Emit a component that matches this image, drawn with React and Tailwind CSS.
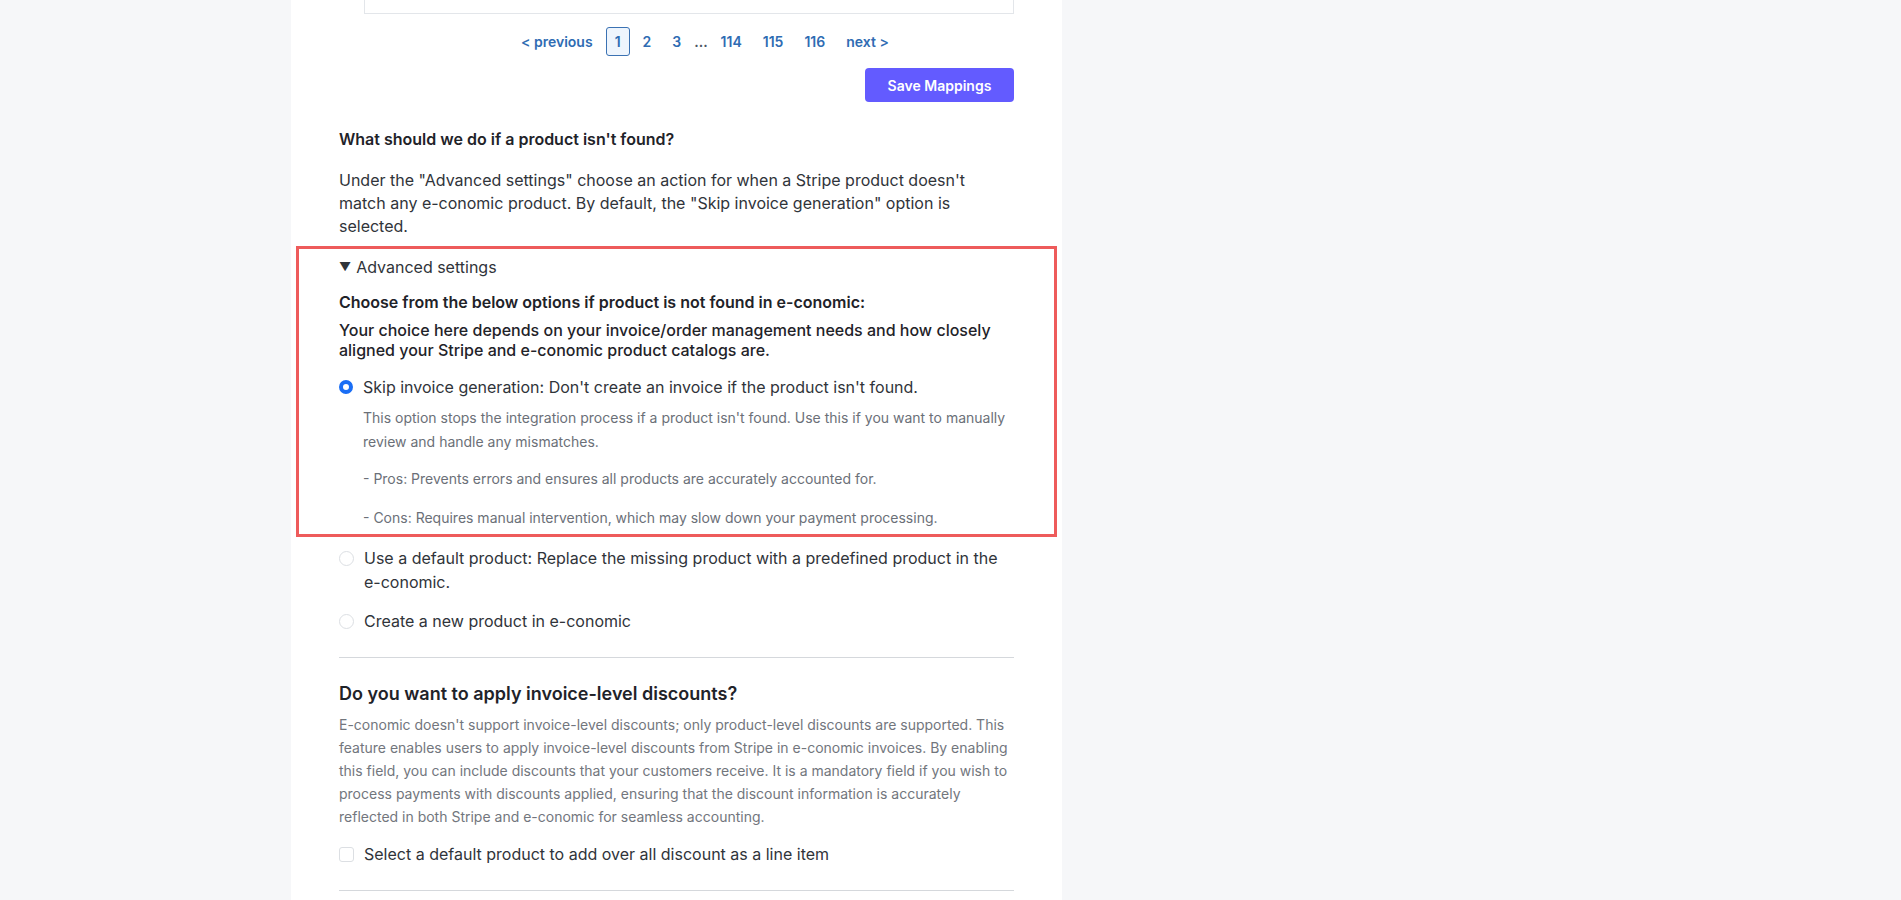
import { useState } from "react";

const pages = ["1", "2", "3", "...", "114", "115", "116"];

const Radio = ({ checked }) => (
  <span
    className={
      checked
        ? "mt-[5px] h-[14px] w-[14px] shrink-0 rounded-full border-[4px] border-[#1a6ef5] bg-white"
        : "mt-[5px] h-[15px] w-[15px] shrink-0 rounded-full border border-[#dcdfe3] bg-white"
    }
  />
);

const App = () => {
  const [choice, setChoice] = useState("skip");

  return (
    <div className="min-h-screen bg-[#f6f7f9] font-['Inter','Liberation_Sans',sans-serif] text-[#212529]">
      <div className="ml-[291px] w-[771px] min-h-screen bg-white px-[48px]">
        {/* end of mappings table */}
        <div className="ml-[25px] h-[14px] border-x border-b border-[#e3e6ea]" />

        {/* pagination */}
        <div className="mt-[13px] ml-[174px] flex items-center gap-[5px] text-[14px] font-semibold text-[#2f6cb3]">
          <span className="px-[8px]">&lt; previous</span>
          {pages.map((p) =>
            p === "..." ? (
              <span key={p} className="px-0 text-[#4b5563]">
                ...
              </span>
            ) : p === "1" ? (
              <span
                key={p}
                className="flex h-[29px] items-center rounded-[3px] border border-[#3b72b3] bg-[#eef5fd] px-[8px]"
              >
                {p}
              </span>
            ) : (
              <span key={p} className="px-[8px]">
                {p}
              </span>
            )
          )}
          <span className="px-[8px]">next &gt;</span>
        </div>

        <div className="mt-[12px] flex justify-end">
          <button className="h-[34px] w-[149px] rounded-[4px] bg-[#635bff] text-[14px] font-semibold text-white">
            Save Mappings
          </button>
        </div>

        <h3 className="mt-[25px] text-[16px] leading-[24px] font-semibold text-[#1f2329]">
          What should we do if a product isn't found?
        </h3>
        <p className="mt-[18px] text-[16px] leading-[23px] text-[#30343a]">
          Under the "Advanced settings" choose an action for when a Stripe
          product doesn't match any e-conomic product. By default, the "Skip
          invoice generation" option is selected.
        </p>

        {/* advanced settings (highlighted) */}
        <div className="-mx-[43px] mt-[8px] border-[3px] border-[#ee5b5b] pl-[40px] pr-[41px] pt-[7px] pb-[4px]">
          <div className="flex items-center gap-[5px] text-[16px] leading-[22px] text-[#30343a]">
            <span className="text-[12px]">▼</span>
            <span>Advanced settings</span>
          </div>
          <p className="mt-[14px] text-[16px] leading-[20px] font-semibold text-[#1f2329]">
            Choose from the below options if product is not found in e-conomic:
          </p>
          <p className="mt-[8px] text-[16px] leading-[20px] font-medium text-[#1f2329]">
            Your choice here depends on your invoice/order management needs and
            how closely aligned your Stripe and e-conomic product catalogs are.
          </p>

          <label
            className="mt-[15px] flex gap-[10px] text-[16px] leading-[24px] text-[#30343a]"
            onClick={() => setChoice("skip")}
          >
            <Radio checked={choice === "skip"} />
            <span>
              Skip invoice generation: Don't create an invoice if the product
              isn't found.
            </span>
          </label>
          <div className="ml-[24px] mt-[7px] text-[14px] leading-[24px] text-[#6b7078]">
            <p>
              This option stops the integration process if a product isn't
              found. Use this if you want to manually review and handle any
              mismatches.
            </p>
            <p className="mt-[13px]">
              - Pros: Prevents errors and ensures all products are accurately
              accounted for.
            </p>
            <p className="mt-[15px]">
              - Cons: Requires manual intervention, which may slow down your
              payment processing.
            </p>
          </div>
        </div>

        <label
          className="mt-[9px] flex gap-[10px] text-[16px] leading-[24px] text-[#30343a]"
          onClick={() => setChoice("default")}
        >
          <Radio checked={choice === "default"} />
          <span>
            Use a default product: Replace the missing product with a predefined
            product in the e-conomic.
          </span>
        </label>
        <label
          className="mt-[15px] flex gap-[10px] text-[16px] leading-[24px] text-[#30343a]"
          onClick={() => setChoice("create")}
        >
          <Radio checked={choice === "create"} />
          <span>Create a new product in e-conomic</span>
        </label>

        <hr className="mt-[24px] border-t border-[#d5d8dc]" />

        <h3 className="mt-[24px] text-[18px] leading-[24px] font-semibold text-[#1f2329]">
          Do you want to apply invoice-level discounts?
        </h3>
        <p className="mt-[7px] text-[14px] leading-[23px] text-[#72767d]">
          E-conomic doesn't support invoice-level discounts; only product-level
          discounts are supported. This feature enables users to apply
          invoice-level discounts from Stripe in e-conomic invoices. By enabling
          this field, you can include discounts that your customers receive. It
          is a mandatory field if you wish to process payments with discounts
          applied, ensuring that the discount information is accurately
          reflected in both Stripe and e-conomic for seamless accounting.
        </p>

        <label className="mt-[14px] flex items-center gap-[10px] text-[16px] leading-[24px] text-[#30343a]">
          <span className="h-[15px] w-[15px] shrink-0 rounded-[3px] border border-[#dcdfe3] bg-white" />
          <span>Select a default product to add over all discount as a line item</span>
        </label>

        <hr className="mt-[24px] border-t border-[#d5d8dc]" />
        <div className="h-[40px]" />
      </div>
    </div>
  );
};

export default App;
